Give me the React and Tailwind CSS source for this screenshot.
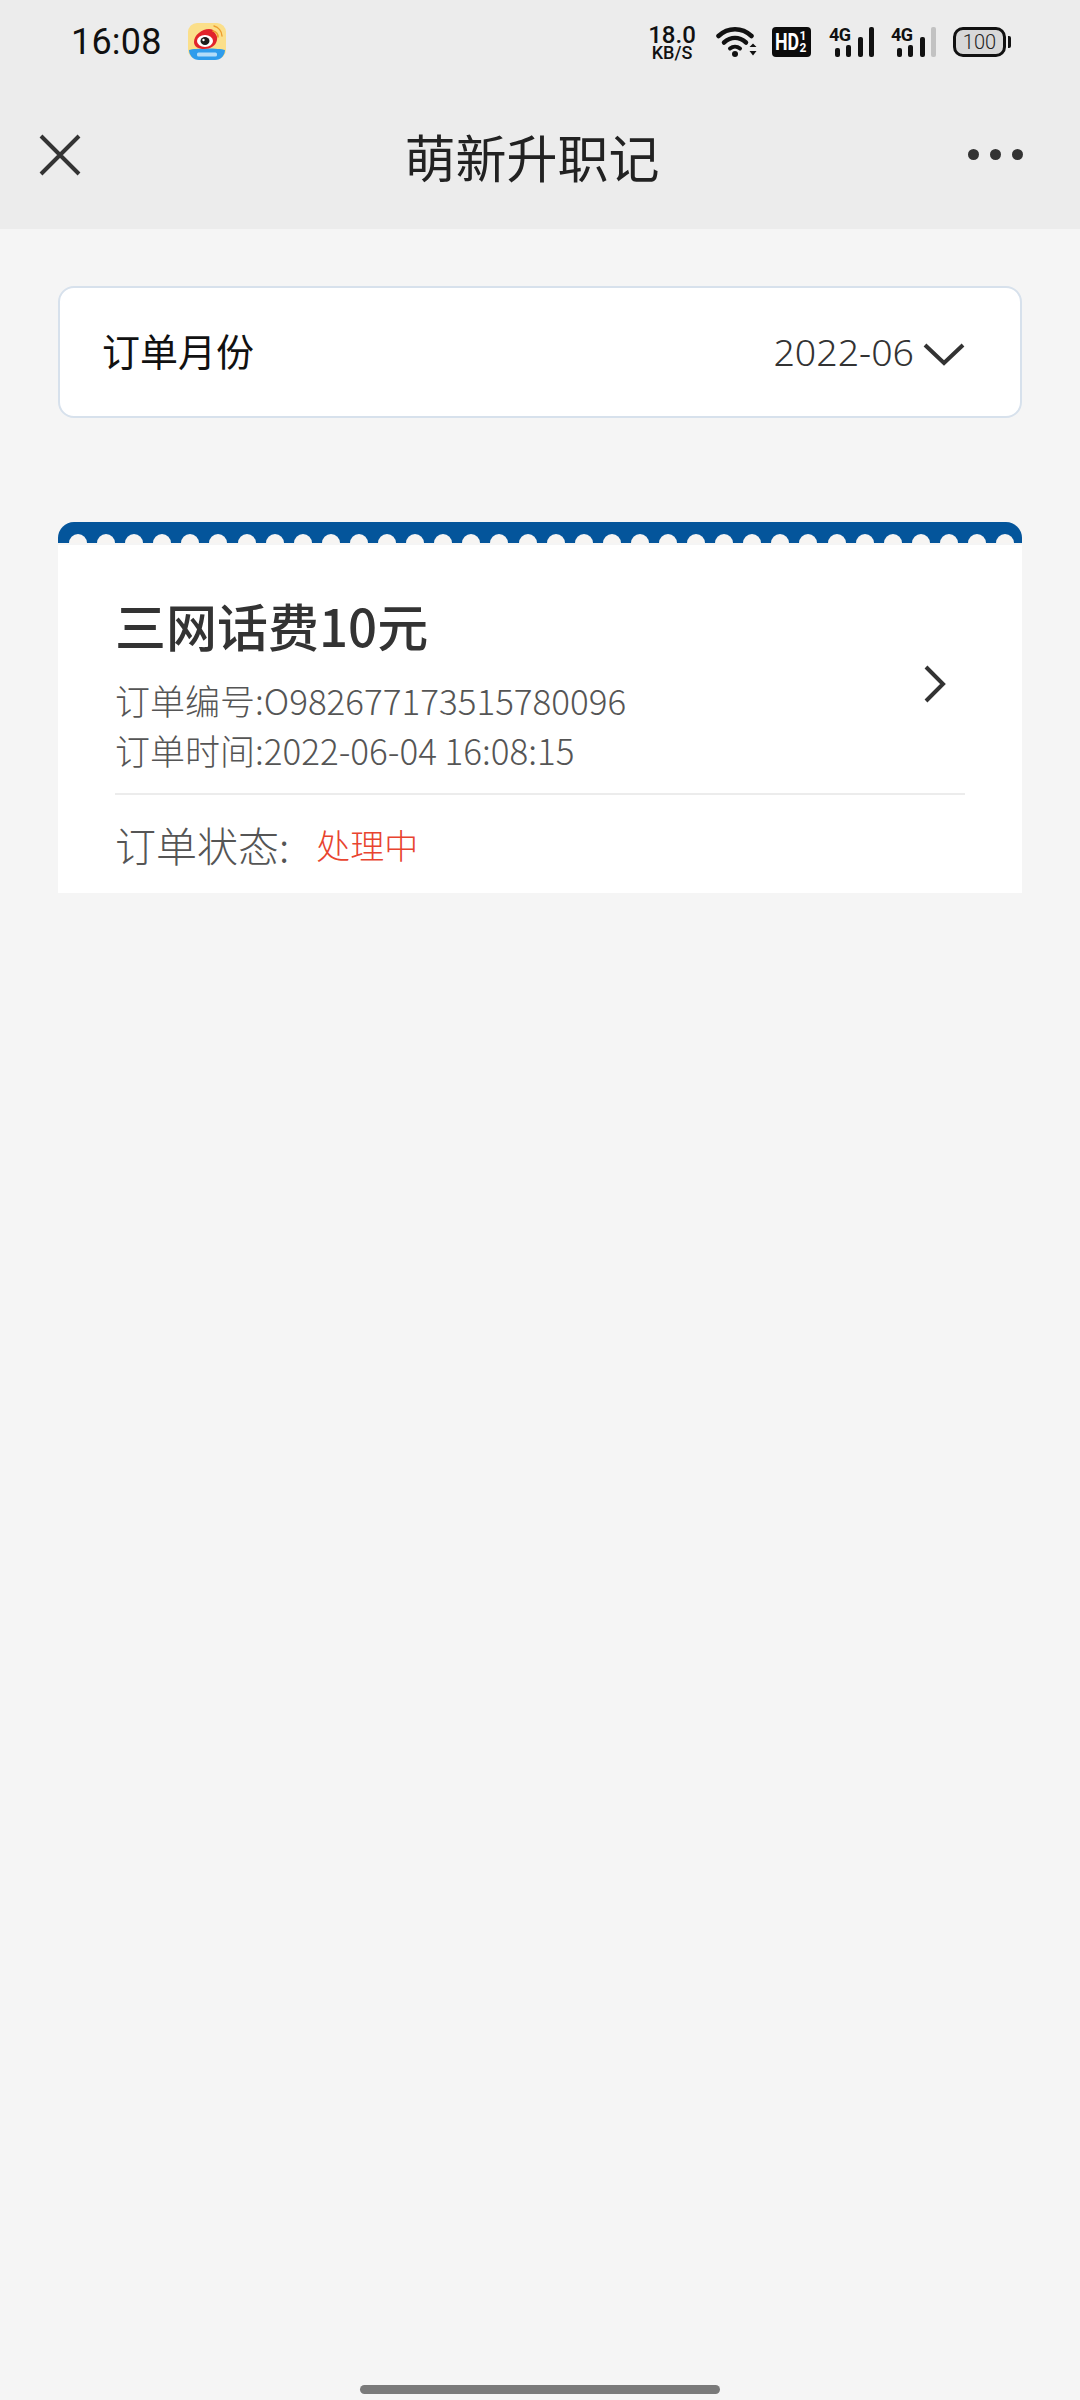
const cjk = { fontFamily: '"Noto Sans CJK SC", "Noto Sans", sans-serif' };

function Signal({ last }) {
  const bars = [
    ["h-[9px]", "bg-[#111]"],
    ["h-[12px]", "bg-[#111]"],
    ["h-[20px]", "bg-[#111]"],
    ["h-[30px]", last],
  ];
  return (
    <div className="relative flex h-[30px] w-[45px] items-end gap-[6.3px] pl-[6px]">
      <span className="absolute -top-[1px] left-0 text-[18px] leading-[18px] font-bold tracking-[-0.5px] text-[#111] [font-family:'Roboto',sans-serif]">4G</span>
      {bars.map(([h, c], i) => (
        <span key={i} className={`w-[5px] rounded-[2px] ${h} ${c}`} />
      ))}
    </div>
  );
}

function Weibo() {
  return (
    <svg width="38" height="38" viewBox="0 0 38 38">
      <rect x="0" y="0" width="38" height="36" rx="9" fill="#fbdf8a" />
      <path d="M1 27c6-2 30-2 36 0 0 5-4 10-10 10H11C5 37 1 32 1 27z" fill="#2f9cec" />
      <path d="M6 19c0-7 8-13 15-13 3 0 5 1 5 3 1 1 4 4 3 8-1 6-7 9-13 9-5 0-10-2-10-7z" fill="#e1242b" />
      <ellipse cx="17" cy="18" rx="8" ry="6" fill="#fff" />
      <ellipse cx="17" cy="18" rx="4.5" ry="4" fill="#1c1c1c" />
      <circle cx="15.5" cy="17" r="1.2" fill="#fff" />
      <path d="M25 8a6 6 0 0 1 5 6" stroke="#ee9c2e" strokeWidth="1.6" fill="none" strokeLinecap="round" />
      <path d="M26 3a11 11 0 0 1 8 10" stroke="#ee9c2e" strokeWidth="1.4" fill="none" strokeLinecap="round" />
      <rect x="9" y="29.5" width="20" height="4" rx="1.5" fill="#d6ecfb" opacity="0.8" />
    </svg>
  );
}

export default function App() {
  const dots = Array.from({ length: 34 });
  return (
    <div className="flex min-h-[2400px] w-[1080px] flex-col bg-[#f5f5f5]" style={cjk}>
      <header className="h-[229px] bg-[#ececec]">
        <div className="flex h-[84px] items-center pr-[69px] pl-[71px]">
          <span className="w-[117px] text-[36px] leading-none tracking-[0.2px] text-[#111] [font-family:'Roboto',sans-serif]">16:08</span>
          <Weibo />
          <div className="ml-auto flex items-center">
            <div className="-ml-[2px] flex w-[48px] flex-col items-center text-[#111] [font-family:'Roboto',sans-serif]">
              <span className="text-[24px] leading-[20px] font-medium">18.0</span>
              <span className="text-[18px] leading-[15px] font-medium">KB/S</span>
            </div>
            <svg className="ml-[20px]" width="42" height="30" viewBox="0 0 42 30" fill="none">
              <path d="M2.5 9C12 0 26 0 35.5 9" stroke="#111" strokeWidth="4.5" strokeLinecap="round" />
              <path d="M8 15.5C15 9.5 23 9.5 30 15.5" stroke="#111" strokeWidth="4.5" strokeLinecap="round" />
              <path d="M14 21.5C17 19 21 19 24 21.5" stroke="#111" strokeWidth="4" strokeLinecap="round" />
              <circle cx="19" cy="27" r="3" fill="#111" />
              <path d="M33.5 20l3.5-3.5 3.5 3.5zM33.5 24l3.5 4.5 3.5-4.5z" fill="#111" />
            </svg>
            <div className="ml-[14px] flex h-[30px] w-[39px] items-center justify-center rounded-[4px] bg-[#0c0c0c] text-white [font-family:'Roboto',sans-serif]">
              <span className="w-[23px] origin-left scale-x-[0.74] text-[24px] leading-none font-bold whitespace-nowrap">HD</span>
              <span className="flex w-[10px] flex-col items-center text-[12px] leading-[12px] font-bold">
                <span>1</span>
                <span>2</span>
              </span>
            </div>
            <div className="ml-[18px]">
              <Signal last="bg-[#111]" />
            </div>
            <div className="ml-[17px]">
              <Signal last="bg-[#c2c2c2]" />
            </div>
            <div className="ml-[17px] flex items-center">
              <div className="flex h-[30px] w-[53px] items-center justify-center rounded-[10px] border-[3px] border-[#111] bg-[#d8d8d8] text-[20px] leading-none font-light text-[#222] [font-family:'Roboto',sans-serif]">
                100
              </div>
              <span className="ml-[2px] h-[12px] w-[3px] rounded-r-[2px] bg-[#111]" />
            </div>
          </div>
        </div>
        <div className="flex h-[145px] items-center justify-between pr-[57px] pl-[38px]">
          <svg width="44" height="44" viewBox="0 0 44 44" className="-mt-[4px]">
            <path d="M3 3L41 41M41 3L3 41" stroke="#333" strokeWidth="4" fill="none" />
          </svg>
          <h1 className="ml-[14px] text-[51px] leading-none font-normal text-[#222]">萌新升职记</h1>
          <div className="-mt-[4px] flex gap-[11px]">
            <span className="h-[11px] w-[11px] rounded-full bg-[#333]" />
            <span className="h-[11px] w-[11px] rounded-full bg-[#333]" />
            <span className="h-[11px] w-[11px] rounded-full bg-[#333]" />
          </div>
        </div>
      </header>

      <main className="px-[58px]">
        <div className="mt-[57px] flex h-[132px] items-center justify-between rounded-[16px] border-[2px] border-[#d7e1ec] bg-white pr-[55px] pl-[42px]">
          <span className="-mt-[4px] text-[38px] leading-none text-[#111]">订单月份</span>
          <div className="flex items-center gap-[9px]">
            <span className="text-[37.5px] leading-none font-light text-[#333] [font-family:'Noto_Sans',sans-serif]">2022-06</span>
            <svg width="42" height="24" viewBox="0 0 42 24" className="mt-[4px]">
              <path d="M2 3L21 21L40 3" stroke="#333" strokeWidth="4" fill="none" />
            </svg>
          </div>
        </div>

        <section className="mt-[104px]">
          <div className="flex h-[21px] items-end gap-[10.1px] overflow-hidden rounded-t-[16px] bg-[#04559b] pl-[11px]">
            {dots.map((_, i) => (
              <span key={i} className="h-[9px] w-[18px] shrink-0 rounded-t-full bg-[#f7f5f3]" />
            ))}
          </div>
          <div className="h-[2px] bg-[#f5f5f5]" />
          <div className="bg-white px-[57px]">
            <div className="flex items-center justify-between border-b-[2px] border-[#ececec] pr-[18px] pb-[18px]">
              <div>
                <h2 className="mt-[49px] text-[51px] leading-[62px] font-medium text-[#333]">三网话费10元</h2>
                <p className="mt-[19px] text-[35px] leading-[50px] font-light text-[#555]">订单编号:O982677173515780096</p>
                <p className="text-[35px] leading-[50px] font-light text-[#555]">订单时间:2022-06-04 16:08:15</p>
              </div>
              <svg width="24" height="38" viewBox="0 0 24 38" className="mt-[48px]">
                <path d="M3 2L20 19L3 36" stroke="#333" strokeWidth="4" fill="none" />
              </svg>
            </div>
            <div className="flex h-[98px] items-center">
              <span className="text-[41px] leading-none font-light text-[#555]">订单状态:</span>
              <span className="mt-[2px] ml-[27px] text-[34px] leading-none font-light text-[#e8442f]">处理中</span>
            </div>
          </div>
        </section>
      </main>

      <div className="mt-auto mb-[6px] h-[9px] w-[360px] self-center rounded-full bg-[#7a7a7a]" />
    </div>
  );
}
